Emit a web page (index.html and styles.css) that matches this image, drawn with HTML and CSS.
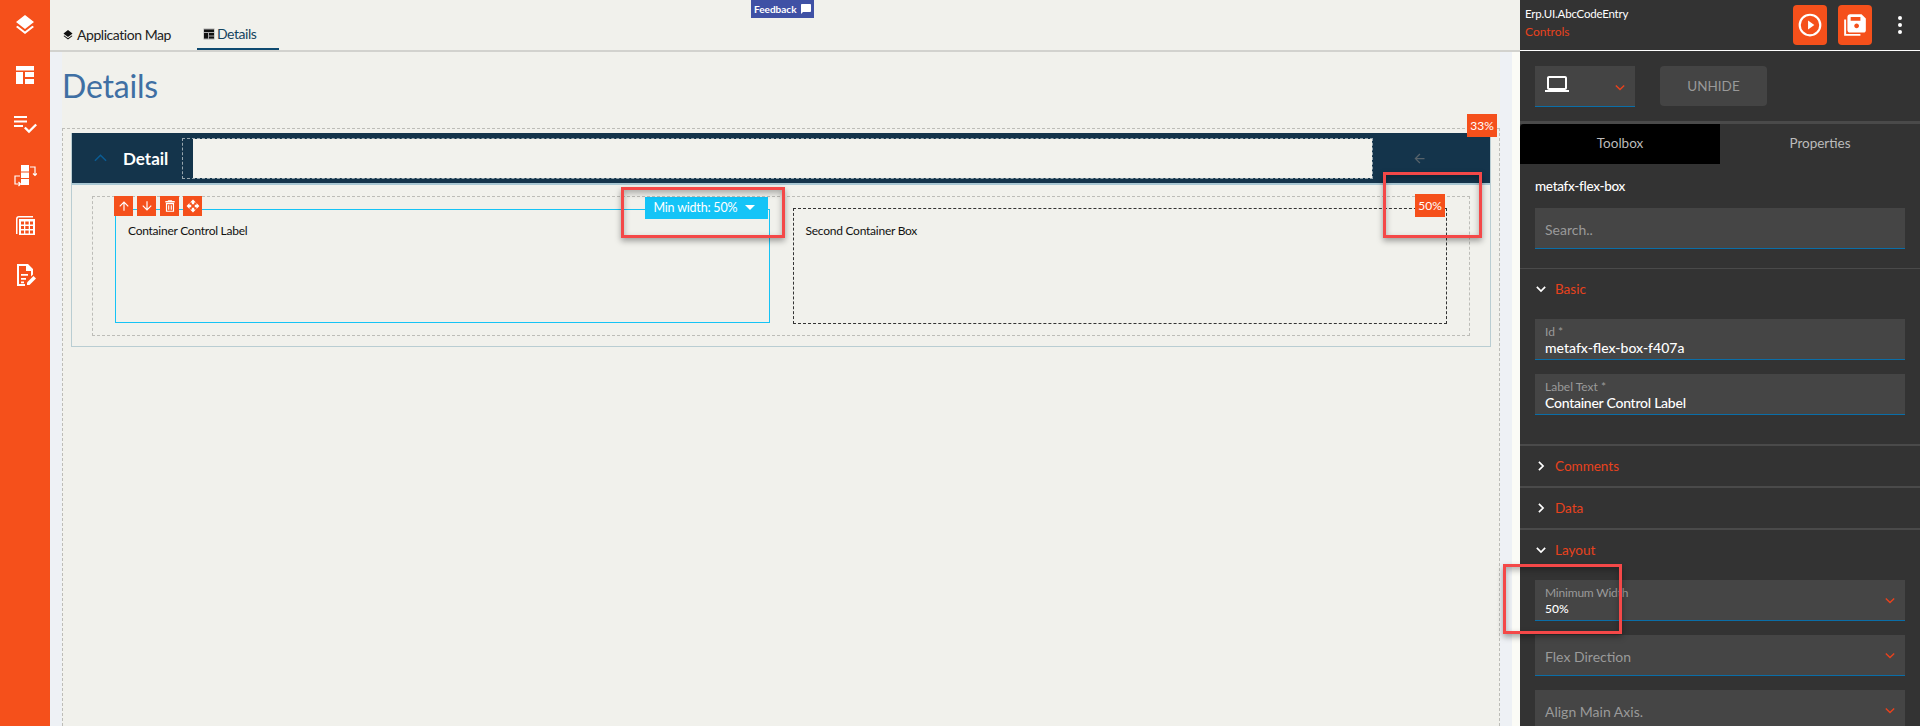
FILE: index.html
```html
<!DOCTYPE html>
<html>
  <head>
    <meta http-equiv="content-type" content="text/html; charset=utf-8" />
    <meta name="viewport" content="width=device-width, initial-scale=1.0">
    <title>Details</title>
    <link rel="stylesheet" href="styles.css">
  </head>
  <body>
    <div class="sidebar">
      <svg class="side_icon" viewBox="0 0 24 24"><path d="M11.99 18.54l-7.37-5.73L3 14.07l9 7 9-7-1.63-1.27-7.38 5.74zM12 16l7.36-5.73L21 9l-9-7-9 7 1.63 1.27L12 16z"/></svg>
      <svg class="side_icon" viewBox="0 0 24 24"><path d="M3 3h18v4.500H3zM3 9h7v12H3zM12 9h9v5H12zM12 16h9v5H12z"/></svg>
      <svg class="side_icon" viewBox="0 0 24 24"><path d="M14 7.500H1v2h13v-2zm0-4.500H1v2h13V3zM1 14h9v-2H1v2zm21.300-3.300L24 12.300l-8 8-5-5 1.700-1.600 3.300 3.300 6.300-6.300z"/></svg>
      <svg class="side_icon" viewBox="0 0 24 24"><path d="M8 2h8v6.500H8zM8 9.500h8V15H8zM8 16h8v6H8z"/><path d="M17 4h5v8M20 10.500l2 2 2-2M7 13H2v8h5M5.500 19l2 2-2 2" fill="none" stroke="#fff" stroke-width="1.200"/></svg>
      <svg class="side_icon" viewBox="0 0 24 24"><path d="M3 6c0-2 1-3 3-3h14v1.400H6C5 4.400 4.500 5 4.500 6v15H3z"/><path fill-rule="evenodd" d="M6 6h16v16H6zm2 2.500v3h3v-3zm4.300 0v3h3.400v-3zm4.700 0v3h3v-3zM8 13v3h3v-3zm4.300 0v3h3.400v-3zm4.700 0v3h3v-3zM8 17.500V20.500h3v-3zm4.300 0V20.500h3.400v-3zm4.700 0V20.500h3v-3z"/></svg>
      <svg class="side_icon" viewBox="0 0 24 24"><path fill-rule="evenodd" d="M4 1h11l5 5v5.500l-2 2V8h-5V3H6v18h6v2H4zM8 11h7v1.800H8zM8 15h5v1.800H8zM8 18.500h3v1.800H8z"/><path d="M14 19.500l6.500-6.500 2.500 2.500-6.500 6.500H14z"/></svg>
    </div>

    <div class="main">
      <div class="top_tabs">
        <div class="top_tab">
          <svg class="tab_icon" viewBox="0 0 24 24"><path d="M11.99 18.54l-7.37-5.73L3 14.07l9 7 9-7-1.63-1.27-7.38 5.74zM12 16l7.36-5.73L21 9l-9-7-9 7 1.63 1.27L12 16z"/></svg>
          Application Map
        </div>
        <div class="top_tab top_tab_active">
          <svg class="tab_icon" viewBox="0 0 24 24"><path d="M1 1h22v22H1z" fill="#aaa"/><path d="M2 3h20v5H2zM2 10h8v11H2zM12 10h10v5H12zM12 17h10v4H12z"/></svg>
          Details
        </div>
      </div>
      <div class="work_area">
        <div class="strip"></div>
        <div class="canvas">
          <h1 class="page_title">Details</h1>
          <div class="outer_drop">
            <div class="card">
              <div class="card_head">
                <svg class="card_chevron" viewBox="0 0 14 8"><path d="M1 7l6-6 6 6" fill="none" stroke="#0b5c94" stroke-width="1.600"/></svg>
                <span class="card_title">Detail</span>
                <div class="head_drop"><div class="head_fill"></div></div>
                <div class="head_action">
                  <svg class="back_icon" viewBox="0 0 24 24"><path d="M20 11H7.830l5.590-5.590L12 4l-8 8 8 8 1.410-1.410L7.830 13H20v-2z"/></svg>
                </div>
              </div>
              <div class="card_body">
                <div class="inner_drop">
                  <div class="box box_selected">
                    Container Control Label
                    <div class="box_tools">
                      <div class="tool_btn"><svg viewBox="0 0 24 24"><path d="M4 12l1.410 1.410L11 7.830V20h2V7.830l5.580 5.590L20 12l-8-8-8 8z"/></svg></div>
                      <div class="tool_btn"><svg viewBox="0 0 24 24"><path d="M20 12l-1.410-1.410L13 16.170V4h-2v12.170l-5.580-5.590L4 12l8 8 8-8z"/></svg></div>
                      <div class="tool_btn"><svg viewBox="0 0 24 24"><path fill-rule="evenodd" d="M9 2h6l1 1.500h4V6H4V3.500h4zM5 7h14v15H5zm2 2v11h10V9zm1.800 1.500h2V18.500h-2zm4.400 0h2V18.500h-2z"/></svg></div>
                      <div class="tool_btn"><svg viewBox="0 0 24 24"><path d="M10 9h4V6h3l-5-5-5 5h3v3zm-1 1H6V7l-5 5 5 5v-3h3v-4zm14 2l-5-5v3h-3v4h3v3l5-5zm-9 3h-4v3H7l5 5 5-5h-3v-3z"/></svg></div>
                    </div>
                    <div class="min_width">Min width: 50% <span class="caret"></span></div>
                  </div>
                  <div class="box box_plain">
                    Second Container Box
                    <div class="pct_badge pct_inner">50%</div>
                  </div>
                </div>
              </div>
            </div>
            <div class="pct_badge pct_outer">33%</div>
          </div>
        </div>
        <div class="strip"></div>
        <div class="strip_light"></div>
      </div>
    </div>

    <div class="panel">
      <div class="panel_head">
        <div class="panel_names">
          <div class="app_name">Erp.UI.AbcCodeEntry</div>
          <div class="app_sub">Controls</div>
        </div>
        <div class="head_btn">
          <svg viewBox="0 0 24 24"><path d="M10.200 7.800v8.400L16 12z"/><circle cx="12" cy="12" r="9.500" fill="none" stroke="#fff" stroke-width="2"/></svg>
        </div>
        <div class="head_btn">
          <svg viewBox="0 0 24 24"><path d="M2 7v15h15v-1.800H3.800V7z"/><path d="M18 2H7.500C6.100 2 5 3.100 5 4.500V16.500C5 17.900 6.100 19 7.500 19H20c1.100 0 2-.9 2-2V6zM13.500 15c-1.200 0-2.200-1-2.200-2.200s1-2.200 2.200-2.200 2.200 1 2.200 2.200-1 2.200-2.200 2.200zM17 8H8V4.500h9z"/></svg>
        </div>
        <div class="kebab"><span></span><span></span><span></span></div>
      </div>

      <div class="device_bar">
        <div class="device_select">
          <svg class="laptop" viewBox="0 0 24 24"><path d="M20 18c1.100 0 1.990-.9 1.990-2L22 6c0-1.100-.9-2-2-2H4c-1.100 0-2 .9-2 2v10c0 1.100.9 2 2 2H0v2h24v-2h-4zM4 6h16v10H4V6z"/></svg>
          <svg class="chev_red" viewBox="0 0 12 8"><path d="M1 1.500l5 5 5-5" fill="none" stroke="#e8421d" stroke-width="1.700"/></svg>
        </div>
        <div class="unhide">UNHIDE</div>
      </div>

      <div class="panel_tabs">
        <div class="panel_tab panel_tab_active">Toolbox</div>
        <div class="panel_tab">Properties</div>
      </div>

      <div class="tool_search">
        <div class="comp_name">metafx-flex-box</div>
        <div class="field field_single">Search..</div>
      </div>

      <div class="section section_first">
        <div class="sec_head">
          <svg class="sec_chev" viewBox="0 0 12 12"><path d="M1 3.500l5 5 5-5" fill="none" stroke="#fff" stroke-width="2"/></svg>
          <span>Basic</span>
        </div>
        <div class="sec_fields sec_fields_basic">
          <div class="field"><div class="field_label">Id *</div><div class="field_value">metafx-flex-box-f407a</div></div>
          <div class="field"><div class="field_label">Label Text *</div><div class="field_value field_value_tight">Container Control Label</div></div>
        </div>
      </div>

      <div class="section">
        <div class="sec_head">
          <svg class="sec_chev" viewBox="0 0 12 12"><path d="M3.500 1l5 5-5 5" fill="none" stroke="#fff" stroke-width="2"/></svg>
          <span>Comments</span>
        </div>
      </div>

      <div class="section">
        <div class="sec_head">
          <svg class="sec_chev" viewBox="0 0 12 12"><path d="M3.500 1l5 5-5 5" fill="none" stroke="#fff" stroke-width="2"/></svg>
          <span>Data</span>
        </div>
      </div>

      <div class="section">
        <div class="sec_head">
          <svg class="sec_chev" viewBox="0 0 12 12"><path d="M1 3.500l5 5 5-5" fill="none" stroke="#fff" stroke-width="2"/></svg>
          <span>Layout</span>
        </div>
        <div class="sec_fields">
          <div class="field field_select">
            <div><div class="field_label field_label_tight">Minimum Width</div><div class="field_value field_value_small">50%</div></div>
            <svg class="chev_red" viewBox="0 0 12 8"><path d="M1 1.500l5 5 5-5" fill="none" stroke="#e8421d" stroke-width="1.700"/></svg>
          </div>
          <div class="field field_select field_single">
            Flex Direction
            <svg class="chev_red" viewBox="0 0 12 8"><path d="M1 1.500l5 5 5-5" fill="none" stroke="#e8421d" stroke-width="1.700"/></svg>
          </div>
          <div class="field field_select field_single">
            Align Main Axis.
            <svg class="chev_red" viewBox="0 0 12 8"><path d="M1 1.500l5 5 5-5" fill="none" stroke="#e8421d" stroke-width="1.700"/></svg>
          </div>
        </div>
      </div>
    </div>

    <!-- things that sit on top of everything -->
    <div class="feedback">Feedback
      <svg viewBox="0 0 24 24"><path d="M20 2H4c-1.100 0-2 .9-2 2v18l4-4h14c1.100 0 2-.9 2-2V4c0-1.100-.9-2-2-2z"/></svg>
    </div>
    <div class="mark mark_min"></div>
    <div class="mark mark_pct"></div>
    <div class="mark mark_field"></div>
  </body>
</html>
```

FILE: styles.css
```css
html, body {
  margin: 0;
  padding: 0;
  height: 100%;
}

body {
  position: relative;
  display: flex;
  overflow: hidden;
  background: #f1f1ec;
  font-family: Lato, "Open Sans", sans-serif;
  font-size: 14px;
}

/* left rail */
.sidebar {
  width: 50px;
  flex: none;
  background: #f5501b;
  display: flex;
  flex-direction: column;
  align-items: center;
  padding-top: 13px;
  box-sizing: border-box;
}

.side_icon {
  width: 24px;
  height: 24px;
  fill: #fff;
  margin-bottom: 26px;
}

/* middle */
.main {
  flex: 1;
  min-width: 0;
  display: flex;
  flex-direction: column;
}

.top_tabs {
  height: 52px;
  flex: none;
  box-sizing: border-box;
  border-bottom: 2px solid #d2d2ce;
  display: flex;
  padding-left: 12px;
}

.top_tab {
  display: flex;
  align-items: center;
  gap: 3px;
  height: 50px;
  padding-top: 18px;
  box-sizing: border-box;
  font-size: 14px;
  letter-spacing: -0.45px;
  color: #222;
  margin-right: 26px;
}

.top_tab_active {
  color: #14445f;
  width: 82px;
  padding-left: 6px;
  gap: 2px;
  border-bottom: 2px solid #0f4a70;
}

.tab_icon {
  width: 12px;
  height: 12px;
  fill: #111;
  margin-top: 2px;
}

.work_area {
  flex: 1;
  display: flex;
  min-height: 0;
}

.strip {
  width: 12px;
  flex: none;
  background: #eef1f5;
}

.strip_light {
  width: 8px;
  flex: none;
  background: #fbfbf6;
}

.canvas {
  flex: 1;
  min-width: 0;
  display: flex;
  flex-direction: column;
}

.page_title {
  margin: 0;
  height: 76px;
  flex: none;
  box-sizing: border-box;
  padding-top: 12px;
  font-size: 32px;
  letter-spacing: -0.2px;
  font-weight: 400;
  line-height: 44px;
  color: #3f6fa3;
}

.outer_drop {
  position: relative;
  flex: 1;
  border: 1px dashed #bdbdb8;
  border-bottom: none;
  padding: 4px 8px 0 8px;
}

.card {
  border: 1px solid #b9cdd2;
  border-top: none;
}

.card_head {
  height: 50px;
  background: #14344b;
  border-bottom: 2px solid #a9c7d3;
  display: flex;
  align-items: center;
}

.card_chevron {
  width: 13px;
  height: 8px;
  margin-left: 22px;
}

.card_title {
  width: 59px;
  margin-left: 16px;
  color: #fff;
  font-size: 17px;
  font-weight: 700;
}

.head_drop {
  flex: 1;
  height: 41px;
  box-sizing: border-box;
  border: 1px dashed #97a6ae;
  padding-left: 10px;
}

.head_fill {
  height: 100%;
  background: #f2f2ed;
}

.head_action {
  width: 117px;
  display: flex;
  justify-content: center;
  padding-right: 25px;
  box-sizing: border-box;
}

.back_icon {
  width: 15px;
  height: 15px;
  fill: #56626a;
}

.card_body {
  padding: 11px 20px 10px 20px;
}

.inner_drop {
  display: flex;
  align-items: flex-start;
  gap: 23px;
  border: 1px dashed #bdbdb8;
  padding: 11px 22px 11px 22px;
}

.box {
  position: relative;
  flex: 1;
  box-sizing: border-box;
  padding: 14px 12px;
  font-size: 12px;
  letter-spacing: -0.25px;
  line-height: 16px;
  color: #111;
}

.box_selected {
  height: 114px;
  margin-top: 1px;
  padding-top: 13px;
  border: 1px solid #15c3f5;
}

.box_plain {
  height: 116px;
  border: 1px dashed #333;
}

.box_tools {
  position: absolute;
  top: -14px;
  left: -2px;
  display: flex;
  gap: 4px;
}

.tool_btn {
  width: 19px;
  height: 20px;
  background: #f5501b;
  display: flex;
  align-items: center;
  justify-content: center;
}

.tool_btn svg {
  width: 14px;
  height: 14px;
  fill: #fff;
}

.min_width {
  position: absolute;
  top: -13px;
  right: 1px;
  width: 123px;
  height: 22px;
  background: #14c4f7;
  color: #fff;
  font-size: 12.500px;
  letter-spacing: -0.2px;
  line-height: 22px;
  padding-left: 9px;
  box-sizing: border-box;
  white-space: nowrap;
}

.caret {
  display: inline-block;
  margin-left: 5px;
  border-left: 5px solid transparent;
  border-right: 5px solid transparent;
  border-top: 5px solid #fff;
  vertical-align: 2px;
}

.pct_badge {
  position: absolute;
  width: 30px;
  height: 23px;
  background: #f5501b;
  color: #fff;
  font-size: 12px;
  letter-spacing: 0;
  line-height: 23px;
  text-align: center;
}

.pct_inner {
  top: -15px;
  right: 1px;
}

.pct_outer {
  top: -15px;
  right: 2px;
}

/* right panel */
.panel {
  width: 400px;
  flex: none;
  background: #333;
  color: #fff;
}

.panel_head {
  height: 51px;
  box-sizing: border-box;
  border-bottom: 1px solid #fff;
  display: flex;
  padding: 5px 0 0 5px;
}

.panel_names {
  width: 268px;
}

.app_name {
  font-size: 11.500px;
  letter-spacing: -0.2px;
  line-height: 18px;
}

.app_sub {
  font-size: 12px;
  line-height: 18px;
  color: #e8421d;
}

.head_btn {
  width: 34px;
  height: 40px;
  margin-right: 11px;
  background: #f5501b;
  border-radius: 4px;
  display: flex;
  align-items: center;
  justify-content: center;
}

.head_btn svg {
  width: 26px;
  height: 26px;
  fill: #fff;
}

.kebab {
  display: flex;
  flex-direction: column;
  gap: 3px;
  padding: 11px 0 0 15px;
}

.kebab span {
  width: 4px;
  height: 4px;
  border-radius: 50%;
  background: #fff;
}

.device_bar {
  height: 73px;
  box-sizing: border-box;
  border-bottom: 3px solid #4a4a4a;
  display: flex;
  gap: 25px;
  padding: 15px 0 0 15px;
}

.device_select {
  width: 100px;
  height: 41px;
  box-sizing: border-box;
  background: #444;
  border-bottom: 1px solid #0a6ea8;
  display: flex;
  justify-content: space-between;
  padding: 6px 10px 0 10px;
}

.laptop {
  width: 24px;
  height: 24px;
  fill: #fff;
}

.chev_red {
  width: 10px;
  height: 7px;
  flex: none;
  margin-top: 14px;
}

.device_select .chev_red {
  margin-top: 12px;
}

.unhide {
  width: 107px;
  height: 40px;
  background: #444;
  border-radius: 4px;
  color: #999;
  font-size: 13.500px;
  line-height: 40px;
  text-align: center;
}

.panel_tabs {
  display: flex;
  height: 40px;
}

.panel_tab {
  flex: 1;
  box-sizing: border-box;
  padding-top: 11px;
  text-align: center;
  font-size: 13.500px;
  color: #bbb;
  border-radius: 4px 4px 0 0;
}

.panel_tab_active {
  background: #000;
  border-radius: 4px 0 0 0;
}

.tool_search {
  height: 105px;
  box-sizing: border-box;
  border-bottom: 1px solid #4a4a4a;
}

.comp_name {
  height: 44px;
  padding: 14px 0 0 15px;
  box-sizing: border-box;
  font-size: 13.500px;
  letter-spacing: -0.3px;
  font-weight: 500;
}

.field {
  height: 41px;
  margin: 0 15px;
  box-sizing: border-box;
  background: #454545;
  border-bottom: 1px solid #0a6ea8;
  padding: 3px 10px 0 10px;
}

.field_single {
  color: #9a9a9a;
  font-size: 14px;
  line-height: 37px;
}

.field_label {
  padding-top: 1px;
  font-size: 12px;
  line-height: 17px;
  color: #9a9a9a;
}

.field_label_tight {
  letter-spacing: -0.2px;
}

.field_value {
  font-size: 14px;
  line-height: 16px;
  font-weight: 500;
}

.field_value_tight {
  letter-spacing: -0.25px;
}

.field_value_small {
  font-size: 12px;
}

.field_select {
  display: flex;
  justify-content: space-between;
}

.section {
  border-top: 2px solid #4a4a4a;
}

.section_first {
  border-top: none;
}

.sec_head {
  height: 40px;
  display: flex;
  align-items: center;
  color: #e8421d;
  font-size: 13.500px;
}

.sec_chev {
  width: 10px;
  height: 10px;
  margin-left: 16px;
  flex: none;
}

.sec_head span {
  margin-left: 9px;
}

.sec_fields {
  display: flex;
  flex-direction: column;
  gap: 14px;
  padding-top: 10px;
}

.sec_fields_basic {
  padding-bottom: 29px;
}

/* overlays */
.feedback {
  position: absolute;
  top: 0;
  left: 751px;
  width: 63px;
  height: 18px;
  box-sizing: border-box;
  background: #3f51a5;
  color: #fff;
  font-size: 10px;
  font-weight: 700;
  line-height: 18px;
  padding-left: 3px;
  display: flex;
  align-items: center;
  gap: 4px;
}

.feedback svg {
  width: 12px;
  height: 12px;
  fill: #fff;
}

.mark {
  position: absolute;
  box-sizing: border-box;
  border: 3px solid #f44848;
  box-shadow: 0 3px 6px rgba(0, 0, 0, 0.35), inset 0 3px 6px rgba(0, 0, 0, 0.3);
}

.mark_min {
  left: 621px;
  top: 187px;
  width: 164px;
  height: 51px;
}

.mark_pct {
  left: 1383px;
  top: 172px;
  width: 99px;
  height: 66px;
}

.mark_field {
  left: 1503px;
  top: 564px;
  width: 119px;
  height: 70px;
}
```
